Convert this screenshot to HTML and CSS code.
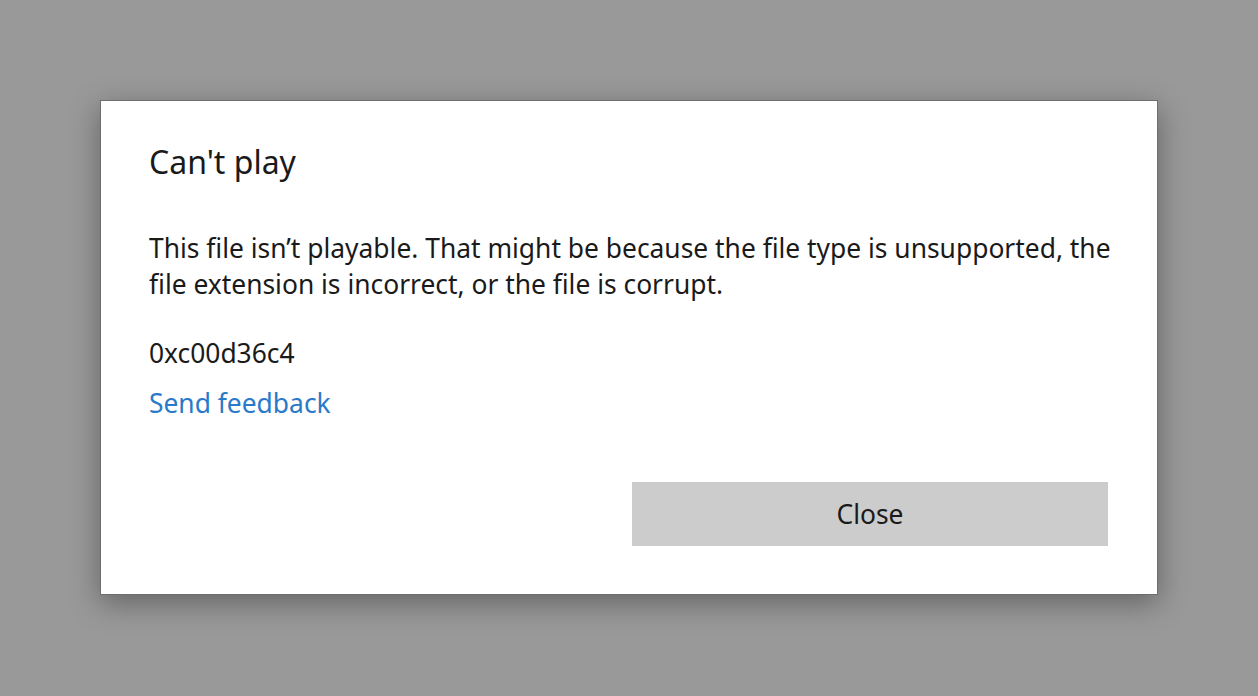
FILE: index.html
```html
<!DOCTYPE html>
<html>
<head>
<meta charset="utf-8">
<link rel="stylesheet" href="styles.css">
</head>
<body>
<div class="dialog">
  <h1 class="title">Can't play</h1>
  <p class="message">This file isn’t playable. That might be because the file type is unsupported, the file extension is incorrect, or the file is corrupt.</p>
  <p class="code">0xc00d36c4</p>
  <a class="link" href="#">Send feedback</a>
  <div class="actions">
    <button class="btn">Close</button>
  </div>
</div>
</body>
</html>
```
FILE: styles.css
```css
html, body {
  margin: 0;
  padding: 0;
  height: 100%;
}
body {
  background: #999999;
  font-family: "Noto Sans", "Open Sans", sans-serif;
  color: #1a1a1a;
  overflow: hidden;
}
.dialog {
  box-sizing: border-box;
  margin: 100px 0 0 100px;
  width: 1058px;
  height: 495px;
  background: #ffffff;
  border: 1px solid #6e6e6e;
  box-shadow: 0 8px 28px rgba(0, 0, 0, 0.35);
  padding: 37px 49px 48px 48px;
  display: flex;
  flex-direction: column;
}
.title {
  margin: 0;
  font-weight: 400;
  font-size: 32px;
  line-height: 48px;
}
.message {
  margin: 44px -14px 0 0;
  font-size: 26.4px;
  line-height: 36px;
}
.code {
  margin: 33px 0 0 0;
  font-size: 26.4px;
  line-height: 36px;
}
.link {
  margin-top: 14px;
  font-size: 26.4px;
  line-height: 36px;
  color: #2a7ac9;
  text-decoration: none;
  align-self: flex-start;
}
.actions {
  margin-top: auto;
  display: flex;
  justify-content: flex-end;
}
.btn {
  width: 476px;
  height: 64px;
  background: #cccccc;
  border: none;
  font-family: inherit;
  font-size: 26.4px;
  color: #1a1a1a;
  padding: 0;
}
```
